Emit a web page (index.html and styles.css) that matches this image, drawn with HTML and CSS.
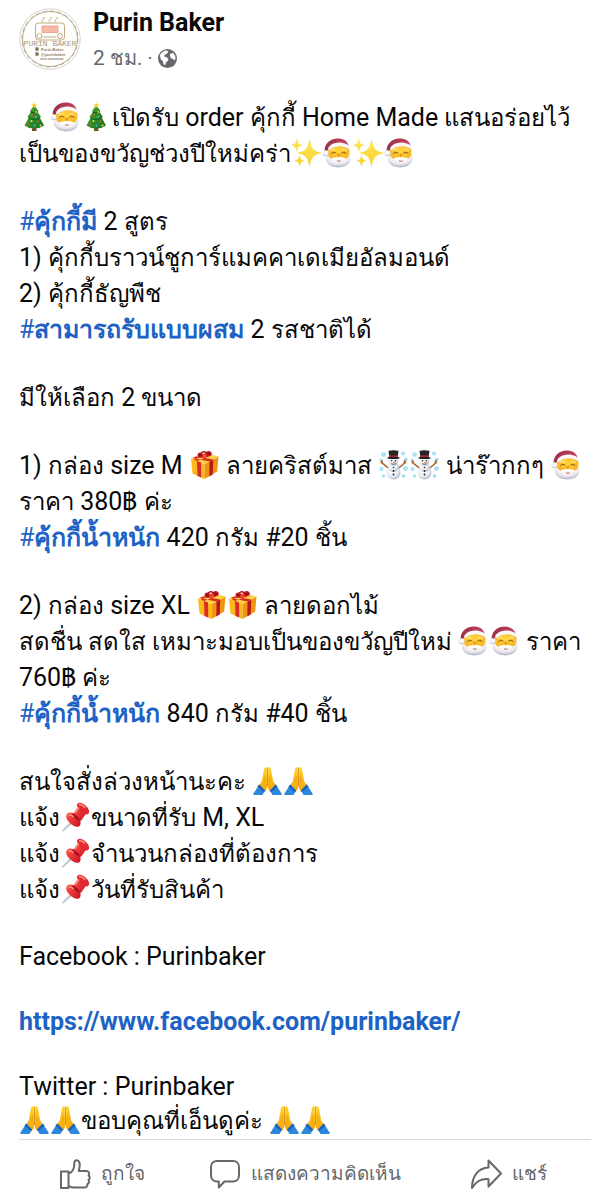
FILE: index.html
```html
<!DOCTYPE html>
<html lang="th">
<head>
<meta charset="utf-8">
<meta name="viewport" content="width=device-width, initial-scale=1">
<title>Purin Baker</title>
<link rel="stylesheet" href="styles.css">
</head>
<body>
<svg class="sprite" aria-hidden="true">
  <defs>
    <linearGradient id="gTree" x1="0" y1="0" x2="1" y2="1"><stop offset="0" stop-color="#4faa2c"/><stop offset="1" stop-color="#0f7326"/></linearGradient>
    <radialGradient id="gFace" cx=".5" cy=".5" r=".6"><stop offset="0" stop-color="#ffd83a"/><stop offset="1" stop-color="#f8b224"/></radialGradient>
    <linearGradient id="gHat" x1="0" y1="0" x2="1" y2="0"><stop offset="0" stop-color="#99314a"/><stop offset="1" stop-color="#c8405c"/></linearGradient>
    <radialGradient id="gBeard" cx=".5" cy=".3" r=".75"><stop offset="0" stop-color="#ffffff"/><stop offset=".6" stop-color="#efeef3"/><stop offset="1" stop-color="#aaa7b8"/></radialGradient>
    <linearGradient id="gHand" x1="0" y1="0" x2="0" y2="1"><stop offset="0" stop-color="#ffd21f"/><stop offset="1" stop-color="#f6a30f"/></linearGradient>
    <linearGradient id="gPin" x1="0" y1="0" x2="1" y2="1"><stop offset="0" stop-color="#ff5a50"/><stop offset="1" stop-color="#c90f20"/></linearGradient>
    <radialGradient id="gSnow" cx=".4" cy=".35" r=".7"><stop offset="0" stop-color="#ffffff"/><stop offset=".6" stop-color="#eceff5"/><stop offset="1" stop-color="#a9b3c8"/></radialGradient>
    <linearGradient id="gStar" x1="0" y1="0" x2="0" y2="1"><stop offset="0" stop-color="#ffe75a"/><stop offset="1" stop-color="#f9cf2a"/></linearGradient>
  </defs>
  <symbol id="tree" viewBox="0 0 31 30">
    <path d="M13.500 24h3.500l.6 5h-4.700z" fill="#7d4a26"/>
    <path d="M15.200 3 19.500 9.300 18.500 9.800 22 15l-1.300.5L25 23.500Q20.500 26.800 15.200 26.500 10 26.800 5.500 23.500L9.700 15.500 8.400 15 12 9.800 11 9.300z" fill="url(#gTree)"/>
    <path d="M11.500 10q3.700 2 7-.4M9.500 16q5.500 3 11.300-.3" fill="none" stroke="#0c5e21" stroke-width="1"/>
    <path d="M15.200.5l.9 2 2.100.2-1.600 1.400.5 2.100-1.900-1.100-1.900 1.100.5-2.100-1.600-1.400 2.100-.2z" fill="#fbc928"/>
    <g fill="#e94b36"><circle cx="13" cy="13" r="1"/><circle cx="19" cy="19.500" r="1.100"/><circle cx="9" cy="22.500" r="1.100"/></g>
    <g fill="#f6d33c"><circle cx="17.300" cy="10" r=".9"/><circle cx="12.500" cy="19" r="1"/><circle cx="21.500" cy="23.500" r="1"/></g>
    <g fill="#54b7e6"><circle cx="17" cy="15" r=".9"/><circle cx="15.500" cy="23.500" r="1"/></g>
  </symbol>
  <symbol id="santa" viewBox="0 0 31 30">
    <path d="M6 14C3.800 18 3.200 21.500 5 24.500c2 3.200 6 4.900 11 4.900s9.500-1.700 11.300-4.900c1.700-3 1.200-7-.6-10.500z" fill="url(#gBeard)"/>
    <path d="M5.500 12.500C6 8 11 5 17 5s10.500 2 10.500 8c0 3-.8 6.700-3.300 7.500-2.500.7-4.500-.5-7.500-.5s-5 1.200-7.500.5C6.500 19.800 5.300 15.500 5.500 12.500z" fill="url(#gFace)"/>
    <path d="M9.500 20.300c2.300-.1 4.800-2.100 7.300-.9 2.500-1.200 5 .8 7.200.9-1.500 2.300-5 2.700-7.200 1.400-2.300 1.300-5.800.9-7.300-1.400z" fill="#fff"/>
    <path d="M15 22.800q1.800 1 3.600 0" fill="none" stroke="#b4513b" stroke-width=".9"/>
    <path d="M9.500 15.200q2.300-2 4.500-.2M19.600 15q2.200-1.800 4.500.2" fill="none" stroke="#8a5a18" stroke-width="1" stroke-linecap="round"/>
    <path d="M9 12.300q2.200-1.500 4.500-.7M20.200 11.600q2.300-.8 4.400.7" fill="none" stroke="#ffeeb0" stroke-width="1" stroke-linecap="round"/>
    <circle cx="16.800" cy="17.200" r="1.400" fill="#f0961f"/>
    <path d="M2.500 13C2.800 5.500 8 .6 15.500.6c6 0 10 2.500 11.300 7.400C20 5 12 5.500 7.500 10.500c-1.500 1-2.300 3.500-5 2.500z" fill="url(#gHat)"/>
    <path d="M6 11.300C6.300 7.800 10.500 4.600 17 4.400c5.700 0 10.300 2.300 10.800 5.100 0 1.500-1.600 1.500-3.100.6C20 7.400 13.700 7.600 9 11.100c-1.300 1-2.800 1.200-3 .2z" fill="#f8f6f9"/>
    <circle cx="3.600" cy="15.300" r="3" fill="url(#gBeard)"/>
  </symbol>
  <symbol id="sparkles" viewBox="0 0 31 30">
    <path d="M18.500 2c1.400 8 3.500 11.500 11.500 13-8 1.500-10.100 5-11.500 13C17.100 20 15 16.500 7 15c8-1.500 10.100-5 11.500-13z" fill="url(#gStar)" stroke="#fbd93a" stroke-width=".6"/>
    <path d="M5.800 1.500c.5 3.500 1.500 5 5 5.700-3.500.7-4.500 2.200-5 5.700-.5-3.500-1.500-5-5-5.700 3.500-.7 4.500-2.200 5-5.700zM8.500 17.500c.5 3.200 1.400 4.700 4.600 5.300-3.200.6-4.100 2.100-4.600 5.300-.5-3.200-1.400-4.700-4.600-5.300 3.200-.6 4.100-2.100 4.600-5.300z" fill="url(#gStar)" stroke="#fbd93a" stroke-width=".6"/>
  </symbol>
  <symbol id="gift" viewBox="0 0 31 30">
    <path d="M2 8.500 15.500 14v15L3.500 23.500z" fill="#fcb81b"/>
    <path d="M29.500 6.500 15.500 14v15l12.700-7.500z" fill="#ee9610"/>
    <path d="M2 8.500 15.500 3l14 3.500L15.500 14z" fill="#ffcf3f"/>
    <path d="M8 10.900l4 1.700.2 15-3.700-1.700z" fill="#db2b24"/>
    <path d="M20.500 11.400l3.700-2 -.5 15-3.400 2z" fill="#b9171e"/>
    <path d="M8 10.900 23 4.900l-3.500-1L4.800 9.600zM7 6.500l17.200 3 -3.700 2L3.500 8z" fill="#d92a25"/>
    <path d="M15.500 7C10 8.500 8 7.500 8.600 4.600 9.200 1.500 13 1.800 15.500 5.500 16.500 1 20 0 22.300 2.200c2.200 2.300-1.500 5-6.800 4.800z" fill="#c91925"/>
    <path d="M13 5.800C11 4 10.200 4 9.900 5.200c-.2 1.300 1.400 1.500 3.100.6zM18 5c.8-2.300 2.200-2.700 3.200-1.700.8 1-1.100 2-3.200 1.700z" fill="#7c1019"/>
    <ellipse cx="15.600" cy="6" rx="2.200" ry="2" fill="#ed4a3d"/>
    <path d="M12 3.200Q14.500.5 17.500 3" fill="none" stroke="#a21425" stroke-width="1.500"/>
  </symbol>
  <symbol id="snowman" viewBox="0 0 31 30">
    <g fill="#9bdcf3"><circle cx="5.500" cy="4.500" r="2.200"/><circle cx="25" cy="3.500" r="2"/><circle cx="3" cy="10" r="1.500"/><circle cx="28" cy="9.500" r="1.700"/><circle cx="3.500" cy="19" r="2"/><circle cx="27.500" cy="18.500" r="2.300"/><circle cx="5.500" cy="26" r="1.600"/><circle cx="25.500" cy="26" r="1.700"/></g>
    <g fill="#d9f4fc"><circle cx="5.500" cy="4.500" r=".8"/><circle cx="25" cy="3.500" r=".7"/><circle cx="3.500" cy="19" r=".7"/><circle cx="27.500" cy="18.500" r=".8"/></g>
    <path d="M10.500 18.200 3 12.200M4.500 13.400l-.6-2.700M20.500 18.200l7.200-6.100M26.200 13.400l.5-2.800" stroke="#a9662d" stroke-width="1.500" stroke-linecap="round"/>
    <circle cx="15.500" cy="22.500" r="7" fill="url(#gSnow)"/>
    <circle cx="15.500" cy="16.500" r="5.200" fill="url(#gSnow)"/>
    <circle cx="15.500" cy="11" r="4.800" fill="url(#gSnow)"/>
    <path d="M10.500.8Q15.500-.4 20.500.8L19.600 7.500h-8.200z" fill="#252429"/>
    <path d="M11.200 5q4.300 1 8.600 0l-.3 2.300q-4 .9-8 0z" fill="#c52e2c"/>
    <ellipse cx="15.500" cy="7.900" rx="6.300" ry="1.200" fill="#1b1a1f"/>
    <g fill="#222"><circle cx="13.600" cy="10.700" r=".8"/><circle cx="17.400" cy="10.700" r=".8"/><circle cx="15.500" cy="17.500" r=".8"/><circle cx="15.500" cy="21" r=".9"/><circle cx="15.500" cy="24.500" r=".9"/></g>
    <path d="M15 11.500l3 1-3 .7z" fill="#f08325"/>
    <path d="M13.200 13.600q2.300 1.500 4.600 0" fill="none" stroke="#333" stroke-width=".7"/>
  </symbol>
  <symbol id="pray" viewBox="0 0 31 30">
    <path d="M14.600 1.200C12.900.9 12.200 2 11.900 4L9.800 15.500 6.500 20l5.500 6c2.200-1.200 3.200-3.300 3.300-6z" fill="url(#gHand)"/>
    <path d="M16.400 1.200c1.700-.3 2.400.8 2.700 2.800l2.100 11.500 3.300 4.500-5.500 6c-2.200-1.200-3.200-3.300-3.300-6z" fill="url(#gHand)"/>
    <path d="M15.500 1.500V20" stroke="#d98a0c" stroke-width=".9"/>
    <path d="M12.500 16.500q.7-3 .8-6M18.500 16.500q-.7-3-.8-6" fill="none" stroke="#e39a10" stroke-width=".8"/>
    <path d="M7.200 18.500 13 24.500 10.500 29H2.200Q.8 29 1.500 27.500z" fill="#2d87dc"/>
    <path d="M23.800 18.500 18 24.500l2.500 4.500h8.300q1.400 0 .7-1.500z" fill="#2d87dc"/>
    <path d="M7.200 18.500 13 24.500l-1 1.800-6.500-5.500zM23.800 18.500 18 24.500l1 1.800 6.500-5.500z" fill="#1a63b8"/>
  </symbol>
  <symbol id="pin" viewBox="0 0 31 30">
    <path d="M12 17.500 14 19.500 3.500 29.200q-1.500.8-1.200-.6z" fill="#aebac6"/>
    <path d="M12 17.500l1 1L2.500 29z" fill="#e4ebf0"/>
    <path d="M18.500 4.500l7.500 7-5 7.500-8-7z" fill="url(#gPin)"/>
    <path d="M6.800 12.300c1.800-2.800 6.600-2 10.200 1.400s4.900 8.200 2.300 10.500c-2.400 1.600-6.500-.3-9.500-3.200s-4.600-6.400-3-8.700z" fill="url(#gPin)"/>
    <path d="M12 11.500q5 1 8.500 7.500-3.500-1-6-3.200t-2.500-4.300z" fill="#a80b1c"/>
    <path d="M17.500 1.800c1.500-1.900 5.300-.8 8.300 2s4.300 6.200 2.600 8c-1.700 1.700-5 .2-7.700-2.300s-4.600-5.900-3.200-7.700z" fill="#e32831"/>
    <path d="M19.500 2.500q2.700.1 5.300 2.700M15.200 10.500l3.500-4.500M8.500 13.200q2.500-.7 5 1.300" fill="none" stroke="#ff9289" stroke-width="1.300" stroke-linecap="round"/>
  </symbol>
</svg>

<article class="post">
  <header class="head">
    <svg class="avatar" viewBox="0 0 62 62" role="img" aria-label="Purin Baker">
      <circle cx="31" cy="31" r="30.300" fill="#fffefc" stroke="#d5d5d1" stroke-width="1"/>
      <circle cx="31" cy="31" r="27.500" fill="none" stroke="#b3ac8d" stroke-width="1"/>
      <circle cx="31" cy="31" r="28" fill="none" stroke="#b3ac8d" stroke-width="1" stroke-dasharray="4 3.330"/>
      <g fill="none" stroke="#c0ae82" stroke-width="1">
        <path d="M24 14q-2-1.500 0-2.700T25 9M31 14q-2-1.500 0-2.700T32 9M37 14q-2-1.500 0-2.700T38 9"/>
        <rect x="16.500" y="15" width="29" height="17" rx="3"/>
        <circle cx="20.500" cy="28" r="2.500"/><circle cx="41" cy="28" r="2.500"/>
        <path d="M24 29h13"/>
      </g>
      <rect x="23" y="18" width="16" height="6.500" fill="#f8b9a9" stroke="#e99b89" stroke-width=".8"/>
      <text x="31" y="38" class="logo-name">PURIN BAKER</text>
      <g fill="#84775b"><circle cx="18" cy="41" r="1.900"/><circle cx="18" cy="46" r="1.900"/></g>
      <text x="22" y="42.500" class="logo-line">Purin Baker</text>
      <text x="22" y="47.500" class="logo-line">@purinbaker</text>
      <text x="21" y="52" class="logo-line">xxx-xxxxxxx</text>
    </svg>
    <div class="who">
      <h1 class="name">Purin Baker</h1>
      <div class="meta">
        <span>2 <span class="th">ชม.</span></span><span>·</span>
        <svg class="globe" viewBox="0 0 18 18" role="img" aria-label="สาธารณะ">
          <circle cx="9" cy="9" r="9" fill="#65676b"/>
          <path d="M1.800 6C2.800 3.500 5.500 1.500 8.500 1.500l1.200 1.200-1.300 1.800-1.900.7-.6 2 2.300.5 1.800 1.800-1 2-1.500 1.200-.6 2.800-1.700-1-.6-2.800-2-1.900z" fill="#fff"/>
          <path d="M11.500 4.500l2.800-.8 2 2.800.3 2.800-1.100 1.700-1.200-1.500-2-.8-1-2z" fill="#fff"/>
        </svg>
      </div>
    </div>
  </header>

  <div class="body">
    <p class="para"><svg class="emoji"><use href="#tree"/></svg><svg class="emoji"><use href="#santa"/></svg><svg class="emoji"><use href="#tree"/></svg><span class="th">เปิดรับ</span> order <span class="th">คุ้กกี้</span> Home Made <span class="th">แสนอร่อยไว้</span><br><span class="th">เป็นของขวัญช่วงปีใหม่คร่า</span><svg class="emoji"><use href="#sparkles"/></svg><svg class="emoji"><use href="#santa"/></svg><svg class="emoji"><use href="#sparkles"/></svg><svg class="emoji"><use href="#santa"/></svg></p>
    <p class="para"><a class="tag" href="#t1"><span class="hash">#</span>คุ้กกี้มี</a> 2 <span class="th">สูตร</span><br>1) <span class="th">คุ้กกี้บราวน์ชูการ์แมคคาเดเมียอัลมอนด์</span><br>2) <span class="th">คุ้กกี้ธัญพืช</span><br><a class="tag" href="#t2"><span class="hash">#</span>สามารถรับแบบผสม</a> 2 <span class="th">รสชาติได้</span></p>
    <p class="para"><span class="th">มีให้เลือก</span> 2 <span class="th">ขนาด</span></p>
    <p class="para">1) <span class="th">กล่อง</span> size M <svg class="emoji"><use href="#gift"/></svg> <span class="th">ลายคริสต์มาส</span> <svg class="emoji"><use href="#snowman"/></svg><svg class="emoji"><use href="#snowman"/></svg> <span class="th">น่าร๊ากกๆ</span> <svg class="emoji"><use href="#santa"/></svg><br><span class="th">ราคา</span> 380฿ <span class="th">ค่ะ</span><br><a class="tag" href="#t3"><span class="hash">#</span>คุ้กกี้น้ำหนัก</a> 420 <span class="th">กรัม</span> #20 <span class="th">ชิ้น</span></p>
    <p class="para">2) <span class="th">กล่อง</span> size XL <svg class="emoji"><use href="#gift"/></svg><svg class="emoji"><use href="#gift"/></svg> <span class="th">ลายดอกไม้</span><br><span class="th">สดชื่น สดใส เหมาะมอบเป็นของขวัญปีใหม่</span> <svg class="emoji"><use href="#santa"/></svg><svg class="emoji"><use href="#santa"/></svg> <span class="th">ราคา</span><br>760฿ <span class="th">ค่ะ</span><br><a class="tag" href="#t3"><span class="hash">#</span>คุ้กกี้น้ำหนัก</a> 840 <span class="th">กรัม</span> #40 <span class="th">ชิ้น</span></p>
    <p class="para"><span class="th">สนใจสั่งล่วงหน้านะคะ</span> <svg class="emoji"><use href="#pray"/></svg><svg class="emoji"><use href="#pray"/></svg><br><span class="th">แจ้ง</span><svg class="emoji"><use href="#pin"/></svg><span class="th">ขนาดที่รับ</span> M, XL<br><span class="th">แจ้ง</span><svg class="emoji"><use href="#pin"/></svg><span class="th">จำนวนกล่องที่ต้องการ</span><br><span class="th">แจ้ง</span><svg class="emoji"><use href="#pin"/></svg><span class="th">วันที่รับสินค้า</span></p>
    <p class="para latin">Facebook : Purinbaker</p>
    <p class="para latin"><a class="tag" href="https://www.facebook.com/purinbaker/">https://www.facebook.com/purinbaker/</a></p>
    <div class="closing">
      <p class="para latin">Twitter : Purinbaker</p>
      <p class="para"><svg class="emoji"><use href="#pray"/></svg><svg class="emoji"><use href="#pray"/></svg><span class="th">ขอบคุณที่เอ็นดูค่ะ</span> <svg class="emoji"><use href="#pray"/></svg><svg class="emoji"><use href="#pray"/></svg></p>
    </div>
  </div>

  <footer class="actions">
    <button class="action" type="button">
      <svg class="icon" viewBox="0 0 32 32" aria-hidden="true"><path d="M2 13.500h7.500V30H2zM9.500 15.500c3.500-1 5.500-4.500 5.800-8.500.1-2.500-.3-4.500 1.700-4.800 3-.3 4.200 3 3.700 6l-.9 4.800h7.500c2.500 0 3.700 2.500 2.300 4.400 1.600 1.300 1.500 3.500-.1 4.600 1 1.500.4 3.500-1.200 4.200.4 2-.9 3.300-3.100 3.300H15c-2.200 0-3.800-.7-5.500-1.700"/></svg>
      <span>ถูกใจ</span>
    </button>
    <button class="action" type="button">
      <svg class="icon" viewBox="0 0 32 32" aria-hidden="true"><path d="M8 3h16c3.600 0 6 2.400 6 6v8.500c0 3.600-2.400 6-6 6h-8.500L9.800 29.500v-6H8c-3.600 0-6-2.400-6-6V9c0-3.600 2.400-6 6-6z"/></svg>
      <span>แสดงความคิดเห็น</span>
    </button>
    <button class="action" type="button">
      <svg class="icon" viewBox="0 0 32 32" aria-hidden="true"><path d="M18.500 2.500 31 15.500 18.500 28.500v-7.300C11 20.500 6.500 23 2 30 2 18 8 10.200 18.500 9.500z"/></svg>
      <span>แชร์</span>
    </button>
  </footer>
</article>
</body>
</html>
```
FILE: styles.css
```css
* {
  box-sizing: border-box;
}

body {
  margin: 0;
  background: #fff;
  color: #080809;
  font-family: Roboto, "Noto Looped Thai", serif;
}

.sprite {
  position: absolute;
  width: 0;
  height: 0;
}

.head {
  display: flex;
  gap: 12px;
  padding: 8px 19px 0;
}

.avatar {
  flex: none;
  width: 62px;
  height: 62px;
}

.logo-name {
  font: 8px "Liberation Mono", monospace;
  text-anchor: middle;
  fill: #a8977b;
}

.logo-line {
  font: bold 4px "Liberation Sans", sans-serif;
  fill: #8d8068;
}

.name {
  margin: 0;
  font-size: 25px;
  font-weight: 700;
  line-height: 30px;
}

.meta {
  display: flex;
  align-items: center;
  gap: 5px;
  margin-top: 5px;
  color: #65676b;
  font-size: 21px;
  line-height: 30px;
}

.meta .th {
  font-size: 20px;
}

.globe {
  width: 19px;
  height: 19px;
}

.body {
  display: flex;
  flex-direction: column;
  gap: 32px;
  margin: 0 19px;
  padding-top: 27px;
  border-bottom: 1px solid #d9dadc;
}

.para {
  margin: 0;
  font-size: 25px;
  line-height: 36px;
}

.para .th {
  font-size: 24px;
}

.latin {
  line-height: 33px;
}

.tag {
  color: #1d62c4;
  font-weight: 700;
  text-decoration: none;
}

.hash {
  font-weight: 400;
}

.emoji {
  width: 31px;
  height: 30px;
  vertical-align: -6px;
}

.actions {
  display: grid;
  grid-template-columns: repeat(3, 1fr);
  padding: 18px 0 6px;
}

.action {
  display: flex;
  align-items: center;
  justify-content: center;
  gap: 10px;
  padding: 0;
  border: 0;
  background: none;
  color: #65676b;
  font: inherit;
  font-size: 19px;
  line-height: 32px;
  white-space: nowrap;
}

.icon {
  width: 32px;
  height: 32px;
  fill: none;
  stroke: #65676b;
  stroke-width: 2;
  stroke-linejoin: round;
}
```
